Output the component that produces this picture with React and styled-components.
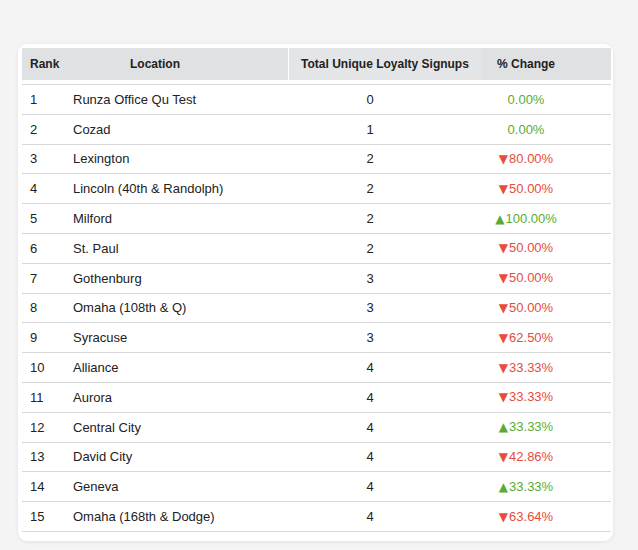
import React from 'react';
import styled, { createGlobalStyle } from 'styled-components';

const GlobalStyle = createGlobalStyle`
    body {
        margin: 0;
        background: #f4f4f4;
        font-family: "Liberation Sans", Arial, sans-serif;
        color: #222;
    }
`;

const Page = styled.div`
    padding: 44px 25px 10px 18px;
`;

const Card = styled.div`
    background: #fff;
    border-radius: 9px;
    padding: 4px 2px 9px 4px;
    box-shadow: 0 1px 4px rgba(0, 0, 0, 0.08);
`;

const Table = styled.table`
    width: 100%;
    border-collapse: separate;
    border-spacing: 0;
    table-layout: fixed;
`;

const Th = styled.th`
    box-sizing: border-box;
    height: 36px;
    padding: 0 ${p => p.$pr || 0}px 0 ${p => p.$pl || 0}px;
    font-size: 12px;
    font-weight: bold;
    color: #222;
    white-space: nowrap;
    text-align: ${p => p.$align || 'center'};
    width: ${p => (p.$w ? `${p.$w}px` : 'auto')};
    background: ${p => (p.$light ? '#e4e5e7' : '#e0e1e3')};
    border-left: ${p => (p.$split ? '1px solid #fff' : 'none')};
    border-bottom: 4px solid #fff;
`;

const Td = styled.td`
    box-sizing: border-box;
    height: ${p => (p.$first ? 30.8 : 29.8)}px;
    padding: 0 ${p => p.$pr || 0}px 0 ${p => p.$pl || 0}px;
    font-size: 13px;
    line-height: 15px;
    white-space: nowrap;
    text-align: ${p => p.$align || 'left'};
    color: ${p => p.$color || '#222'};
    border-top: ${p => (p.$first ? '1px solid #d6d6d6' : 'none')};
    border-bottom: 1px solid #d6d6d6;
`;

const Arrow = styled.span`
    font-family: "DejaVu Sans", sans-serif;
    font-size: 12px;
    margin-right: 1px;
`;

const rows = [
    [1, 'Runza Office Qu Test', 0, 0, '0.00%'],
    [2, 'Cozad', 1, 0, '0.00%'],
    [3, 'Lexington', 2, -1, '80.00%'],
    [4, 'Lincoln (40th & Randolph)', 2, -1, '50.00%'],
    [5, 'Milford', 2, 1, '100.00%'],
    [6, 'St. Paul', 2, -1, '50.00%'],
    [7, 'Gothenburg', 3, -1, '50.00%'],
    [8, 'Omaha (108th & Q)', 3, -1, '50.00%'],
    [9, 'Syracuse', 3, -1, '62.50%'],
    [10, 'Alliance', 4, -1, '33.33%'],
    [11, 'Aurora', 4, -1, '33.33%'],
    [12, 'Central City', 4, 1, '33.33%'],
    [13, 'David City', 4, -1, '42.86%'],
    [14, 'Geneva', 4, 1, '33.33%'],
    [15, 'Omaha (168th & Dodge)', 4, -1, '63.64%'],
];

const GREEN = '#5aab33';
const RED = '#e74c3c';

const App = () => (
    <>
        <GlobalStyle />
        <Page>
            <Card>
                <Table>
                    <thead>
                        <tr>
                            <Th $w={42} $align="left" $pl={8}>Rank</Th>
                            <Th $w={224} $pr={42}>Location</Th>
                            <Th $w={193} $split $light>Total Unique Loyalty Signups</Th>
                            <Th $pr={40}>% Change</Th>
                        </tr>
                    </thead>
                    <tbody>
                        {rows.map(([rank, name, count, dir, pct], i) => {
                            const first = i === 0;
                            return (
                                <tr key={rank}>
                                    <Td $first={first} $pl={8}>{rank}</Td>
                                    <Td $first={first} $pl={9}>{name}</Td>
                                    <Td $first={first} $align="center" $pr={29}>{count}</Td>
                                    <Td $first={first} $align="center" $pr={40} $color={dir < 0 ? RED : GREEN}>
                                        {dir < 0 && <Arrow>▼</Arrow>}
                                        {dir > 0 && <Arrow>▲</Arrow>}
                                        {pct}
                                    </Td>
                                </tr>
                            );
                        })}
                    </tbody>
                </Table>
            </Card>
        </Page>
    </>
);

export default App;
